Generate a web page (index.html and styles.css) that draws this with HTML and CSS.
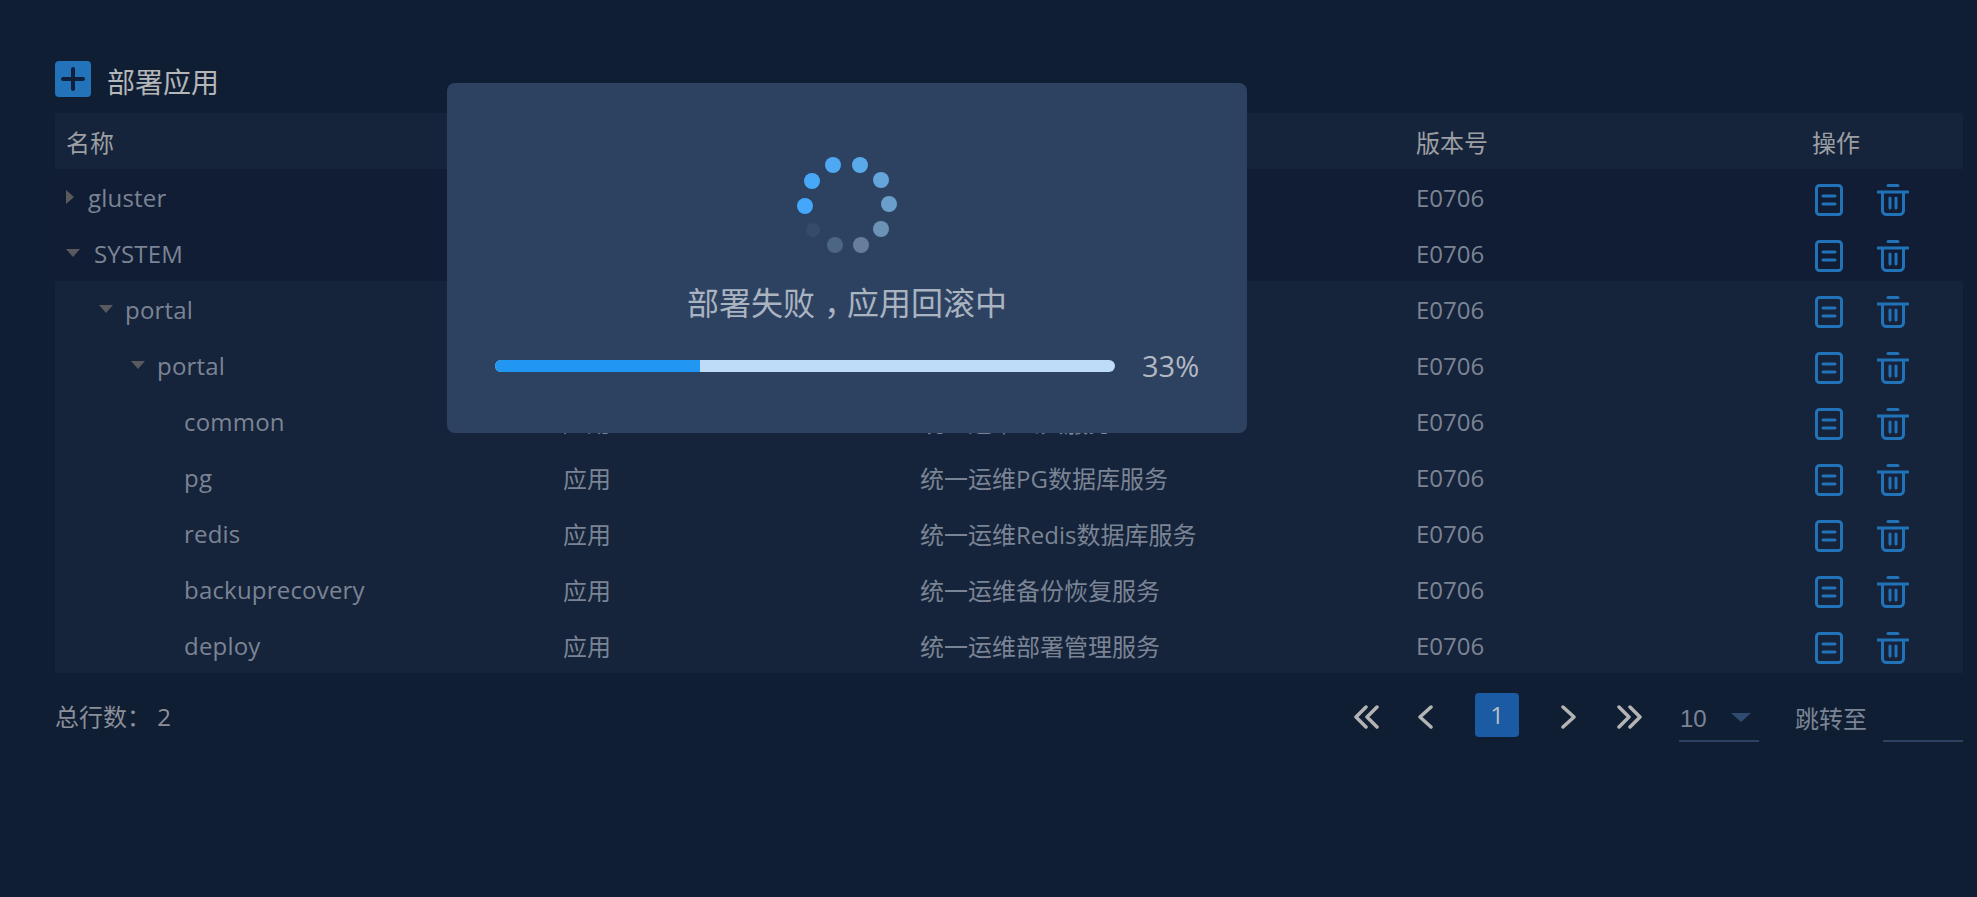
FILE: index.html
```html
<!DOCTYPE html>
<html lang="zh">
<head>
<meta charset="utf-8">
<title>部署应用</title>
<link rel="stylesheet" href="styles.css">
</head>
<body>
<svg class="defs" width="0" height="0" aria-hidden="true">
  <symbol id="doc" viewBox="0 0 28 32"><rect x="1.5" y="1.5" width="25" height="29" rx="3" fill="none" stroke="currentColor" stroke-width="3"/><path d="M8 12h12M8 20h12" stroke="currentColor" stroke-width="3" stroke-linecap="round"/></symbol>
  <symbol id="trash" viewBox="0 0 32 32"><path d="M11 1.5h10M1 8h30M5.500 8v18.500a4 4 0 0 0 4 4h13a4 4 0 0 0 4-4V8M13 14v10M19 14v10" fill="none" stroke="currentColor" stroke-width="3" stroke-linecap="round"/></symbol>
</svg>
<main class="page">
  <div class="title-row">
    <button class="add-btn" aria-label="部署应用"><svg viewBox="0 0 36 36" width="36" height="36"><path d="M18 8v20M8 18h20" stroke="#10203a" stroke-width="4" stroke-linecap="round"/></svg></button>
    <h1 class="title">部署应用</h1>
  </div>
  <table class="grid">
    <colgroup><col class="c1"><col class="c2"><col class="c3"><col class="c4"><col class="c5"></colgroup>
    <thead><tr><th>名称</th><th></th><th></th><th>版本号</th><th>操作</th></tr></thead>
    <tbody>
      <tr class="top"><td><span class="tree l0"><i class="caret right"></i>gluster</span></td><td></td><td></td><td>E0706</td><td><span class="ops"><svg class="ico doc"><use href="#doc"/></svg><svg class="ico trash"><use href="#trash"/></svg></span></td></tr>
      <tr class="top"><td><span class="tree l0"><i class="caret down"></i>SYSTEM</span></td><td></td><td></td><td>E0706</td><td><span class="ops"><svg class="ico doc"><use href="#doc"/></svg><svg class="ico trash"><use href="#trash"/></svg></span></td></tr>
      <tr><td><span class="tree l1"><i class="caret down"></i>portal</span></td><td></td><td></td><td>E0706</td><td><span class="ops"><svg class="ico doc"><use href="#doc"/></svg><svg class="ico trash"><use href="#trash"/></svg></span></td></tr>
      <tr><td><span class="tree l2"><i class="caret down"></i>portal</span></td><td></td><td></td><td>E0706</td><td><span class="ops"><svg class="ico doc"><use href="#doc"/></svg><svg class="ico trash"><use href="#trash"/></svg></span></td></tr>
      <tr><td><span class="tree l3">common</span></td><td>应用</td><td>统一运维公共服务</td><td>E0706</td><td><span class="ops"><svg class="ico doc"><use href="#doc"/></svg><svg class="ico trash"><use href="#trash"/></svg></span></td></tr>
      <tr><td><span class="tree l3">pg</span></td><td>应用</td><td>统一运维PG数据库服务</td><td>E0706</td><td><span class="ops"><svg class="ico doc"><use href="#doc"/></svg><svg class="ico trash"><use href="#trash"/></svg></span></td></tr>
      <tr><td><span class="tree l3">redis</span></td><td>应用</td><td>统一运维Redis数据库服务</td><td>E0706</td><td><span class="ops"><svg class="ico doc"><use href="#doc"/></svg><svg class="ico trash"><use href="#trash"/></svg></span></td></tr>
      <tr><td><span class="tree l3">backuprecovery</span></td><td>应用</td><td>统一运维备份恢复服务</td><td>E0706</td><td><span class="ops"><svg class="ico doc"><use href="#doc"/></svg><svg class="ico trash"><use href="#trash"/></svg></span></td></tr>
      <tr><td><span class="tree l3">deploy</span></td><td>应用</td><td>统一运维部署管理服务</td><td>E0706</td><td><span class="ops"><svg class="ico doc"><use href="#doc"/></svg><svg class="ico trash"><use href="#trash"/></svg></span></td></tr>
    </tbody>
  </table>
  <div class="foot">
    <div class="total">总行数<span class="colon">：</span> 2</div>
    <nav class="pager">
      <svg class="pg first" viewBox="0 0 25 24"><path d="M12 2 2 12l10 10M23 2 13 12l10 10" fill="none" stroke="#b4b4b4" stroke-width="3.500" stroke-linecap="round" stroke-linejoin="round"/></svg>
      <svg class="pg prev" viewBox="0 0 15 24"><path d="M13 2 2 12l11 10" fill="none" stroke="#b4b4b4" stroke-width="3.500" stroke-linecap="round" stroke-linejoin="round"/></svg>
      <span class="cur">1</span>
      <svg class="pg next" viewBox="0 0 15 24"><path d="M2 2l11 10L2 22" fill="none" stroke="#b4b4b4" stroke-width="3.500" stroke-linecap="round" stroke-linejoin="round"/></svg>
      <svg class="pg last" viewBox="0 0 25 24"><path d="M2 2l10 10L2 22M13 2l10 10-10 10" fill="none" stroke="#b4b4b4" stroke-width="3.500" stroke-linecap="round" stroke-linejoin="round"/></svg>
      <span class="size">10<i class="size-caret"></i></span>
      <span class="jump">跳转至</span>
      <span class="jump-input"></span>
    </nav>
  </div>
</main>
<section class="modal">
  <svg class="spinner" viewBox="0 0 100 100" width="100" height="100">
    <circle cx="36" cy="10" r="8" fill="#4ea8f2"/>
    <circle cx="63" cy="10" r="8" fill="#5aa9ea"/>
    <circle cx="84" cy="25" r="8" fill="#65a5dc"/>
    <circle cx="92" cy="49" r="8" fill="#6a9fcb"/>
    <circle cx="84" cy="74" r="8" fill="#6c93b6"/>
    <circle cx="64" cy="90" r="8" fill="#667e9c"/>
    <circle cx="38" cy="90" r="8" fill="#4d6584"/>
    <circle cx="16" cy="75" r="7" fill="#354b6b"/>
    <circle cx="8" cy="51" r="8" fill="#44a7fb"/>
    <circle cx="15" cy="26" r="8" fill="#48a8f8"/>
  </svg>
  <p class="msg">部署失败<span class="comma">，</span>应用回滚中</p>
  <div class="progress">
    <div class="bar"><div class="fill" style="width:33%"></div></div>
    <span class="pct">33%</span>
  </div>
</section>
</body>
</html>
```
FILE: styles.css
```css
* { box-sizing: border-box; }
html, body { margin: 0; height: 100%; }
body {
  background: #101e34;
  color: #7b8494;
  font-family: "Open Sans", "Noto Sans CJK SC", sans-serif;
  font-size: 24px;
  overflow: hidden;
  position: relative;
}
.defs { position: absolute; }
.page { padding: 61px 14px 0 55px; }
.title-row { display: flex; align-items: center; gap: 16px; height: 36px; margin-bottom: 16px; }
.add-btn { width: 36px; height: 36px; padding: 0; border: 0; border-radius: 4px; background: #2273b9; display: block; }
.add-btn svg { display: block; }
.title { margin: 6px 0 0; font-size: 28px; font-weight: 400; color: #b4b6b9; line-height: 40px; }
.grid { width: 100%; border-collapse: collapse; table-layout: fixed; }
.c1 { width: 497px; } .c2 { width: 357px; } .c3 { width: 496px; } .c4 { width: 396px; }
.grid th { height: 56px; padding: 0 11px; text-align: left; font-weight: 400; color: #9c9fa3; background: #15243a; }
.grid td { height: 56px; padding: 0 11px; background: #15233b; white-space: nowrap; }
.grid tr.top td { background: #101d34; }
.tree { display: flex; align-items: center; letter-spacing: .2px; }
.l1 { padding-left: 33px; } .l2 { padding-left: 65px; } .l3 { padding-left: 118px; }
.caret { display: block; width: 0; height: 0; border-style: solid; border-color: transparent; }
.caret.down { border-width: 8px 7.500px 0; border-top-color: #5a5a5c; margin-right: 12px; }
.l0 .caret.down { margin-right: 14px; }
.caret.right { border-width: 7px 0 7px 8px; border-left-color: #5a5a5c; margin-right: 14px; }
.ops { display: flex; gap: 34px; align-items: center; padding: 6px 0 0 3px; color: #2272b8; }
.ico { display: block; height: 32px; }
.ico.doc { width: 28px; }
.ico.trash { width: 32px; }
.foot { display: flex; align-items: center; justify-content: space-between; height: 64px; margin-top: 10px; }
.total { color: #8a8f99; }
.colon { font-family: "Noto Sans CJK TC", sans-serif; }
.pager { display: flex; align-items: center; }
.pg { display: block; height: 24px; margin-top: 4px; }
.first { width: 25px; margin-right: 39px; }
.prev { width: 15px; margin-right: 42px; }
.cur { width: 44px; height: 44px; border-radius: 4px; background: #1a5ba3; color: #b9bfc6; text-align: center; line-height: 44px; margin-right: 42px; }
.next { width: 15px; margin-right: 41px; }
.last { width: 25px; margin-right: 37px; }
.size { position: relative; width: 80px; height: 49px; border-bottom: 2px solid #2d4261; line-height: 46px; padding: 3px 0 0 1px; margin-top: 4px; margin-right: 36px; color: #7b8494; font-family: "Liberation Sans", sans-serif; }
.size-caret { position: absolute; left: 52px; top: 20px; width: 0; height: 0; border-style: solid; border-width: 9px 10px 0; border-color: #2f4c70 transparent transparent; }
.jump { color: #7b8494; margin-right: 16px; margin-top: 4px; }
.jump-input { display: block; width: 80px; height: 49px; border-bottom: 2px solid #2d4261; margin-top: 4px; }
.modal { position: absolute; left: 447px; top: 83px; width: 800px; height: 350px; border-radius: 8px; background: #2d4261; display: flex; flex-direction: column; align-items: center; padding-top: 72px; }
.spinner { display: block; flex: none; }
.msg { margin: 26px 0 0; font-size: 32px; line-height: 44px; color: #aab3c0; }
.comma { display: inline-block; padding-left: 9px; letter-spacing: -9px; }
.progress { width: 100%; display: flex; align-items: center; padding-left: 48px; margin-top: 21px; }
.bar { width: 620px; height: 12px; border-radius: 6px; background: #bedbf8; overflow: hidden; }
.fill { height: 100%; background: #2196f3; }
.pct { margin-left: 27px; font-size: 29px; line-height: 40px; color: #b4b9c1; }
```
